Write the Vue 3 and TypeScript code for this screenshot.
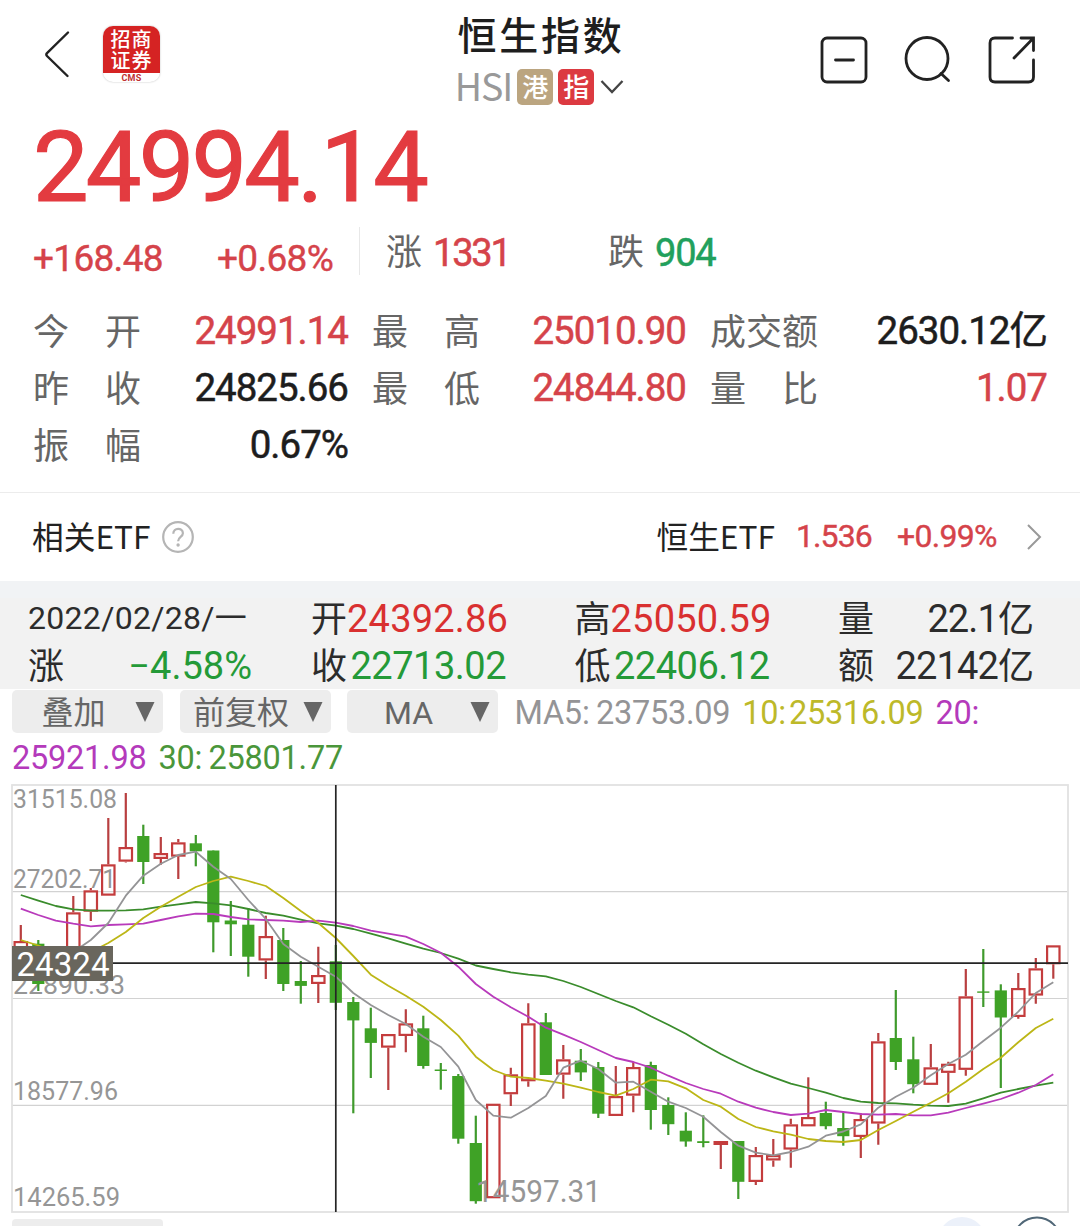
<script setup lang="ts">
type Tone = 'up' | 'down' | 'plain'

interface Stat {
  label: string[]
  value: string
  tone: Tone
}

// Quote summary, column by column
const statColumns: Stat[][] = [
  [
    { label: ['今', '开'], value: '24991.14', tone: 'up' },
    { label: ['昨', '收'], value: '24825.66', tone: 'plain' },
    { label: ['振', '幅'], value: '0.67%', tone: 'plain' },
  ],
  [
    { label: ['最', '高'], value: '25010.90', tone: 'up' },
    { label: ['最', '低'], value: '24844.80', tone: 'up' },
  ],
  [
    { label: ['成', '交', '额'], value: '2630.12亿', tone: 'plain' },
    { label: ['量', '比'], value: '1.07', tone: 'up' },
  ],
]

const selectors = ['叠加', '前复权', 'MA']

// Candles: [rising, high, body top, body bottom, low] in chart units
type Candle = [number, number, number, number, number]
const candles: Candle[] = [
  [1, 925, 941, 950, 950], [0, 940, 943.7, 984, 991], [1, 950, 955, 970, 975], [1, 896, 912.3, 955, 955],
  [1, 888, 890.3, 911.7, 921], [1, 818, 864.3, 895.7, 895.7], [1, 793, 847, 861.7, 862.5], [0, 824.7, 836, 862, 884],
  [1, 837, 853, 859, 864.7], [1, 839, 842.3, 856.7, 879], [0, 835, 843.3, 851.3, 866.3], [0, 850.5, 850.5, 922.3, 952.3],
  [0, 901, 920.5, 924.3, 956], [0, 908, 924.7, 956.7, 976.7], [1, 915.7, 936, 960.5, 979], [0, 928, 940, 984, 991],
  [0, 961, 981, 985.9, 1003.7], [1, 946.7, 975, 984, 1003], [0, 945, 961.3, 1002.8, 1010], [0, 997, 1002, 1020.4, 1113.3],
  [0, 1007.7, 1028.3, 1042.9, 1078], [1, 1034, 1034, 1047.7, 1090], [1, 1009.3, 1023.3, 1036, 1052.3], [0, 1015.7, 1028.3, 1066, 1068.7],
  [0, 1063, 1069.5, 1071, 1089.7], [0, 1074, 1076, 1138.7, 1143.7], [0, 1115.7, 1143, 1201.2, 1203.7], [1, 1103.7, 1103.7, 1198.3, 1198.3],
  [1, 1067.7, 1074.3, 1094.3, 1106], [1, 1003.3, 1023.3, 1081.3, 1086.7], [0, 1013, 1022.3, 1075, 1075], [1, 1045, 1059.3, 1074.7, 1098.7],
  [0, 1049, 1060.7, 1072.4, 1081], [0, 1062, 1067, 1113.7, 1118], [1, 1066, 1096, 1116, 1116], [1, 1061.7, 1067, 1095.7, 1112.3],
  [0, 1061.7, 1065, 1110, 1129.7], [0, 1097.3, 1105, 1124.2, 1135], [0, 1112.3, 1130.7, 1141.5, 1146.7], [0, 1115.3, 1141.2, 1143, 1147.3],
  [1, 1141, 1141, 1145, 1169], [0, 1141, 1141, 1181.8, 1199], [1, 1147, 1155, 1182, 1185], [1, 1139, 1155, 1160.5, 1166.7],
  [1, 1118.7, 1124.3, 1149.6, 1167.7], [1, 1077.3, 1117, 1126.4, 1126.4], [0, 1101.7, 1113, 1126.2, 1129.3], [0, 1112, 1128, 1136.2, 1145.7],
  [1, 1113.3, 1119, 1137, 1158], [1, 1033, 1041.3, 1123.6, 1144.7], [0, 990, 1038, 1062, 1070], [0, 1036.7, 1059.3, 1084.2, 1093.3],
  [1, 1044, 1067.3, 1084.9, 1084.9], [1, 1061.7, 1063.7, 1072.9, 1102.7], [1, 969, 996.3, 1069.9, 1075.7], [0, 949, 991.4, 992.8, 1007],
  [0, 984.3, 990.4, 1017.5, 1088], [1, 973, 988, 1017, 1018.7], [1, 958, 968.3, 995.6, 1003.7], [1, 945.3, 945.3, 964.3, 978.7],
]

const xOf = (i: number): number => 20.8 + i * 17.5

interface Average {
  color: string
  from: number
  ys: number[]
}
const averages: Average[] = [
  {
    color: '#3a8c2c', from: 0,
    ys: [895, 900.7, 906, 909.3, 910.7, 910.7, 910.3, 909.3, 906.7, 904.3, 902, 903.3, 905.3, 909, 913, 915.7, 919.7, 923.3, 925.7, 929, 933.7, 938.3, 943.7, 948.7, 953, 958.7, 965.5, 969, 972.3, 974.7, 976.3, 981, 987, 994, 1001, 1007.3, 1016.3, 1024.7, 1033.7, 1044.3, 1054, 1062.7, 1070.7, 1077.3, 1083.7, 1088, 1092.7, 1098, 1101.7, 1103, 1103.3, 1104.7, 1105.7, 1106, 1103.7, 1098.3, 1092.7, 1089, 1085.7, 1082.7],
  },
  {
    color: '#b83abb', from: 0,
    ys: [908.7, 915, 920.7, 923.7, 926.3, 925, 924.3, 923.7, 920, 916.3, 913.7, 914, 917, 919.3, 920, 920.7, 922, 920.7, 922.7, 926, 930.7, 933.7, 936.7, 944, 952.7, 966.7, 984, 996.7, 1007.3, 1016.7, 1027.7, 1034.7, 1042, 1050, 1058, 1062, 1067.7, 1075.7, 1083, 1089, 1093.7, 1101.7, 1107.7, 1112, 1115, 1113.7, 1110, 1112, 1114, 1114.7, 1114, 1115.3, 1115.3, 1112.7, 1108, 1103.7, 1099, 1092.7, 1085, 1074.3],
  },
  {
    color: '#bcb616', from: 0,
    ys: [940, 945.5, 952, 955, 952, 943, 932, 918, 906.7, 896.7, 887, 881, 876.7, 881, 886, 898, 911, 923, 938, 956, 974.7, 985.7, 995.7, 1006.7, 1020, 1035.7, 1056.7, 1070, 1076.7, 1078, 1080.7, 1083.7, 1087.7, 1092, 1095.7, 1089, 1079.7, 1081.3, 1088.3, 1100, 1106.7, 1119, 1127, 1131.3, 1134.7, 1139, 1141, 1142, 1140, 1130, 1121, 1111.7, 1102.7, 1093.3, 1081.7, 1069, 1057.7, 1042.3, 1028, 1018.7],
  },
  {
    color: '#949496', from: 3,
    ys: [952, 940, 923, 895.7, 875.7, 863.7, 855, 851.7, 866.7, 879, 900, 919, 944, 956.7, 966.7, 976.7, 993, 1005, 1015, 1024, 1036.7, 1047, 1066.7, 1100, 1115.7, 1117.7, 1108, 1096, 1067.7, 1060.7, 1069, 1082.7, 1081.7, 1091.7, 1101.7, 1108, 1116.7, 1132, 1145.7, 1152.7, 1155.3, 1152, 1146.7, 1135.7, 1131.5, 1124.3, 1107.7, 1096.7, 1087.7, 1075.3, 1064, 1054.7, 1041, 1027.7, 1011.7, 993, 982.3],
  },
]

const pointsOf = (a: Average): string => a.ys.map((y, i) => `${xOf(i + a.from)},${y}`).join(' ')

const axis = [
  { text: '31515.08', y: 807.5, w: 104 },
  { text: '27202.71', y: 887.5, w: 103 },
  { text: '22890.33', y: 993.5, w: 112 },
  { text: '18577.96', y: 1099.5, w: 105 },
  { text: '14265.59', y: 1205.5, w: 107 },
]
</script>

<template>
  <main class="page">
    <header class="top">
      <div class="side">
        <svg class="back" width="30" height="50" viewBox="0 0 30 50">
          <path d="M25 3.5 4 24.2q-1.4 1.4 0 2.8L24.500 47" />
        </svg>
        <div class="logo">
          <div class="logo-name"><span>招商</span><span>证券</span></div>
          <div class="logo-sub">CMS</div>
        </div>
      </div>
      <div class="heading">
        <h1>恒生指数</h1>
        <div class="code">
          <span class="symbol">HSI</span>
          <span class="badge hk">港</span>
          <span class="badge idx">指</span>
          <svg width="26" height="18" viewBox="0 0 26 18"><path d="M2.5 3 13 14 23.500 3" /></svg>
        </div>
      </div>
      <div class="side tools">
        <svg width="50" height="50" viewBox="0 0 50 50">
          <rect x="3" y="3" width="44" height="44" rx="5" /><path d="M16.500 25h18" />
        </svg>
        <svg width="50" height="50" viewBox="0 0 50 50">
          <circle cx="24" cy="23.500" r="21" /><path d="m38 38.500 7.500 7" />
        </svg>
        <svg width="50" height="50" viewBox="0 0 50 50">
          <path d="M25.500 3H8Q3 3 3 8V42Q3 47 8 47H41.500Q46.500 47 46.500 42V25M34 3H46.500V15.500M46 3.500 27 23" />
        </svg>
      </div>
    </header>

    <div class="price">24994.14</div>

    <div class="changes">
      <span class="chg c1 up">+168.48</span>
      <span class="chg c2 up">+0.68%</span>
      <span class="bar"></span>
      <span class="breadth b1"><em>涨</em><b class="up">1331</b></span>
      <span class="breadth"><em>跌</em><b class="fall">904</b></span>
    </div>

    <section class="stats">
      <div v-for="(col, c) in statColumns" :key="c" class="stat-col">
        <div v-for="s in col" :key="s.value" class="stat">
          <span class="label"><span v-for="ch in s.label" :key="ch">{{ ch }}</span></span>
          <span class="value" :class="s.tone">{{ s.value }}</span>
        </div>
      </div>
    </section>

    <section class="etf">
      <span class="etf-name">相关ETF</span>
      <svg class="help" width="34" height="34" viewBox="0 0 34 34">
        <circle cx="17" cy="17" r="14.800" />
        <path d="M12.300 13.800c0-6.500 9.600-6.300 9.600-.6 0 3.800-4.800 3.600-4.800 8" />
        <circle class="dot" cx="17.100" cy="25" r="1.700" />
      </svg>
      <span class="etf-name target">恒生ETF</span>
      <span class="etf-num val up">1.536</span>
      <span class="etf-num pc up">+0.99%</span>
      <svg class="more" width="18" height="30" viewBox="0 0 18 30"><path d="M3 3 15 15 3 27" /></svg>
    </section>

    <section class="detail">
      <div class="cell w1"><span class="date">2022/02/28/一</span></div>
      <div class="cell w2"><span class="k">开</span><span class="n hi">24392.86</span></div>
      <div class="cell w3"><span class="k">高</span><span class="n hi">25050.59</span></div>
      <div class="cell w4"><span class="k">量</span><span class="n">22.1<i>亿</i></span></div>
      <div class="cell w1"><span class="k">涨</span><span class="n lo">−4.58%</span></div>
      <div class="cell w2"><span class="k">收</span><span class="n lo tight">22713.02</span></div>
      <div class="cell w3"><span class="k">低</span><span class="n lo tight">22406.12</span></div>
      <div class="cell w4"><span class="k">额</span><span class="n">22142<i>亿</i></span></div>
    </section>

    <section class="controls">
      <div class="row">
        <button v-for="s in selectors" :key="s" class="pill" type="button">
          <span>{{ s }}</span>
          <svg width="20" height="20" viewBox="0 0 20 20"><path d="M.5 0h19L10 20z" /></svg>
        </button>
        <span class="ma m5">MA5:&thinsp;<span>23753.09</span></span>
        <span class="ma m10">10:&hairsp;<span>25316.09</span></span>
        <span class="ma m20">20:</span>
      </div>
      <div class="row second">
        <span class="ma m20">25921.98</span>
        <span class="ma m30">30:&thinsp;<span>25801.77</span></span>
      </div>
    </section>

    <svg class="chart" width="1080" height="446" viewBox="0 780 1080 446">
      <g stroke="#d2d2d2" stroke-width="1.200">
        <path d="M12 891.700H1068M12 998.500H1068M12 1105.300H1068" />
      </g>
      <rect x="12" y="785" width="1056" height="427" fill="none" stroke="#e2e2e2" stroke-width="1.800" />
      <g class="axis">
        <text v-for="a in axis" :key="a.text" x="13" :y="a.y" :textLength="a.w" lengthAdjust="spacingAndGlyphs">{{ a.text }}</text>
      </g>
      <g v-for="(k, i) in candles" :key="i">
        <template v-if="k[0]">
          <path :d="`M${xOf(i)} ${k[1]}V${k[2]}M${xOf(i)} ${k[3]}V${k[4]}`" stroke="#b83f40" stroke-width="2.200" />
          <rect :x="xOf(i) - 6.2" :y="k[2] + 1.1" width="12.400" :height="k[3] - k[2] - 2.2" fill="none" stroke="#c43c3d" stroke-width="2.200" />
        </template>
        <template v-else>
          <path :d="`M${xOf(i)} ${k[1]}V${k[4]}`" stroke="#3f9a2c" stroke-width="2.200" />
          <rect :x="xOf(i) - 6.1" :y="k[2]" width="12.200" :height="k[3] - k[2]" fill="#3fa226" />
        </template>
      </g>
      <polyline v-for="a in averages" :key="a.color" :points="pointsOf(a)" fill="none" :stroke="a.color" stroke-width="1.800" stroke-linejoin="round" />
      <text class="low" x="476" y="1201.500" textLength="125" lengthAdjust="spacingAndGlyphs">14597.31</text>
      <path d="M335.800 785V1212M12 963.100H1068" stroke="#252525" stroke-width="1.700" />
      <rect x="12" y="946" width="101" height="35" fill="#69665d" />
      <text class="tag" x="16.500" y="976" textLength="93" lengthAdjust="spacingAndGlyphs">24324</text>
      <rect x="12" y="1219" width="151" height="40" rx="4" fill="#ededed" />
      <circle cx="962" cy="1241" r="24" fill="#ecf1fa" />
      <circle cx="1037" cy="1241" r="23.500" fill="#fff" stroke="#506777" stroke-width="2" />
    </svg>
  </main>
</template>

<style>
body {
  margin: 0;
  background: #fff;
}
</style>

<style scoped>
.page {
  width: 1080px;
  height: 1226px;
  overflow: hidden;
  background: #fff;
  color: #222;
  font-family: Roboto, 'Noto Sans CJK SC', sans-serif;
}
.page svg {
  display: block;
  flex: none;
}
.up { color: #d5434a; }
.fall { color: #22a05c; }
.plain { color: #1d1d1d; }

.top {
  display: grid;
  grid-template-columns: 1fr 170px 1fr;
  height: 112px;
}
.side {
  display: flex;
  align-items: flex-start;
  padding: 24px 0 0 43px;
}
.back path {
  fill: none;
  stroke: #222;
  stroke-width: 2.4;
  stroke-linecap: round;
}
.back { margin-top: 5px; }
.logo {
  width: 57px;
  height: 56px;
  margin: 2px 0 0 30px;
  border-radius: 10px;
  background: #fff;
  box-shadow: 0 0 2px #bbb;
}
.logo-name {
  display: flex;
  flex-direction: column;
  align-items: center;
  height: 45px;
  padding-top: 2px;
  border-radius: 10px 10px 0 0;
  background: #d52323;
  color: #fff;
  font: 500 20px/21px 'Noto Sans CJK SC', sans-serif;
  letter-spacing: 1px;
}
.logo-sub {
  font-size: 9px;
  line-height: 10px;
  font-weight: 700;
  letter-spacing: 0.3px;
  text-align: center;
  color: #c03030;
}
.heading {
  display: flex;
  flex-direction: column;
  align-items: center;
}
h1 {
  margin: 7px 0 0;
  font: 500 39px/52px 'Noto Sans CJK SC', sans-serif;
  letter-spacing: 2.700px;
  padding-left: 2px;
  white-space: nowrap;
  color: #1e1e1e;
}
.code {
  display: flex;
  align-items: center;
  height: 36px;
  margin-top: 10px;
  gap: 5px;
}
.symbol {
  height: 40px;
  font: 400 37.500px/36px 'Noto Sans CJK SC', sans-serif;
  color: #999;
  letter-spacing: -1px;
}
.badge {
  width: 36px;
  height: 36px;
  border-radius: 5px;
  color: #fff;
  font: 500 26px/34px 'Noto Sans CJK SC', sans-serif;
  text-align: center;
}
.hk { background: #bba580; }
.idx { background: #dc3a41; }
.code path {
  fill: none;
  stroke: #444;
  stroke-width: 2.300;
}
.tools {
  justify-content: flex-end;
  gap: 34px;
  padding: 35px 43px 0 0;
}
.tools svg {
  fill: none;
  stroke: #222;
  stroke-width: 2.800;
  stroke-linecap: round;
}

.price {
  height: 110px;
  padding-left: 33px;
  font-size: 99px;
  line-height: 111px;
  letter-spacing: -2.800px;
  -webkit-text-stroke: 1.200px #e33b40;
  color: #e33b40;
}

.changes {
  display: flex;
  align-items: center;
  height: 58px;
  padding: 0 0 12px 33px;
  font-size: 38px;
}
.chg {
  padding-top: 15px;
  font-size: 37px;
  letter-spacing: -0.700px;
  -webkit-text-stroke: 0.400px currentColor;
}
.c1 { width: 184px; }
.c2 { width: 142px; }
.bar {
  width: 1px;
  height: 48px;
  background: #e8e8e8;
}
.breadth {
  display: flex;
  gap: 11px;
  margin-left: 26px;
  padding-top: 4px;
  line-height: 50px;
}
.b1 { width: 196px; }
.breadth em {
  font-style: normal;
  font-size: 36px;
  color: #666;
}
.breadth b {
  font-weight: 400;
  letter-spacing: -1.200px;
  -webkit-text-stroke: 0.500px currentColor;
}
.b1 b { letter-spacing: -2.200px; }

.stats {
  display: grid;
  grid-template-columns: 315px 314px 337px;
  column-gap: 24px;
  height: 190px;
  padding: 10px 0 0 33px;
  border-bottom: 1px solid #ececec;
}
.stat {
  display: flex;
  justify-content: space-between;
  height: 57px;
  line-height: 57px;
}
.label {
  display: flex;
  justify-content: space-between;
  width: 108px;
  padding-top: 3px;
  font-size: 36px;
  color: #666;
}
.value {
  font-size: 38.500px;
  letter-spacing: -1px;
  -webkit-text-stroke: 0.500px currentColor;
}

.etf {
  display: flex;
  align-items: center;
  height: 88px;
  padding-left: 32px;
}
.etf-name {
  height: 64px;
  font: 400 31.700px/60px 'Noto Sans CJK SC', sans-serif;
  white-space: nowrap;
}
.help { margin-left: 10px; }
.help circle,
.help path {
  fill: none;
  stroke: #b5b5b5;
  stroke-width: 2.200;
}
.help .dot {
  fill: #b5b5b5;
  stroke: none;
}
.target {
  margin-left: auto;
}
.etf-num {
  font-size: 32px;
  line-height: 60px;
  height: 62px;
  -webkit-text-stroke: 0.400px currentColor;
}
.val {
  width: 80px;
  margin-left: 21px;
  letter-spacing: -0.900px;
}
.pc {
  width: 102px;
  margin-left: 21px;
  letter-spacing: -0.700px;
}
.more { margin: 0 37px 0 26px; }
.more path {
  fill: none;
  stroke: #999;
  stroke-width: 2;
}

.detail {
  display: grid;
  grid-template-columns: 283px 263.500px 263.500px 195px;
  grid-auto-rows: 47px;
  height: 94px;
  padding: 14px 0 0 28px;
  background: linear-gradient(#f1f3f5 17px, #f2f2f2 17px);
  color: #2c2c2c;
  font-size: 36px;
  line-height: 47px;
}
.cell {
  display: flex;
  justify-content: space-between;
  width: 195px;
  white-space: nowrap;
}
.cell.w1 { width: 224px; }
.k { padding-top: 2px; }
.date {
  font-size: 32px;
  letter-spacing: 0.300px;
}
.n {
  padding-top: 1px;
  font-size: 38px;
}
.n i {
  font-style: normal;
  font-size: 36px;
}
.w2 .n,
.w3 .n { letter-spacing: 0.200px; }
.w4 .n { letter-spacing: -0.900px; }
.w2 .n.tight,
.w3 .n.tight { letter-spacing: -0.500px; }
.hi { color: #d93030; }
.lo { color: #249a38; }

.controls {
  height: 91px;
}
.row {
  display: flex;
  height: 45px;
  padding: 1px 0 0 12px;
  box-sizing: border-box;
}
.pill {
  display: flex;
  align-items: center;
  justify-content: space-between;
  width: 151px;
  height: 43px;
  margin: 0 16.500px 0 0;
  padding: 0 8px 0 0;
  border: 0;
  border-radius: 5px;
  background: #ededed;
  color: #666;
  font: 400 32px/43px Roboto, 'Noto Sans CJK SC', sans-serif;
}
.pill span {
  flex: 1;
  padding-top: 3px;
  text-align: center;
  white-space: nowrap;
}
.pill path { fill: #666; }
.ma {
  margin-right: 12px;
  font-size: 32.500px;
  line-height: 46px;
  letter-spacing: -0.250px;
  white-space: nowrap;
}
.m5 { color: #949496; }
.m10 { color: #bdb929; }
.m20 { color: #b43abb; }
.m30 { color: #4a963a; }

.axis text {
  font-size: 26px;
  fill: #969696;
}
.low {
  font-size: 32px;
  fill: #969696;
}
.tag {
  font-size: 33px;
  fill: #fff;
}
</style>
